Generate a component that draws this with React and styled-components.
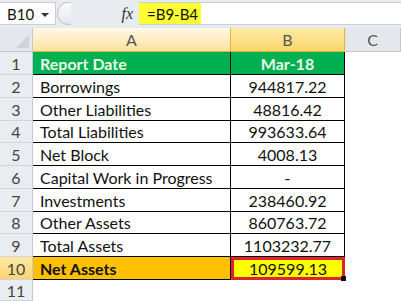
import React from "react";
import styled, { createGlobalStyle } from "styled-components";

const Global = createGlobalStyle`
  html, body { margin: 0; padding: 0; background: #fff; }
  body { font-family: Lato, "Open Sans", sans-serif; width: 401px; height: 301px; overflow: hidden; }
`;

const Page = styled.div`
  width: 401px;
  height: 301px;
  display: flex;
  flex-direction: column;
  background: #fff;
`;

const FormulaBar = styled.div`
  height: 28px;
  background: #e8ebef;
  display: flex;
  align-items: flex-start;
  padding-top: 2px;
  box-sizing: border-box;
`;

const NameBox = styled.div`
  width: 56px;
  height: 23px;
  background: #fff;
  border: 1px solid #c9ced6;
  border-left: none;
  box-sizing: border-box;
  display: flex;
  align-items: center;
  padding-left: 7px;
  font-size: 15px;
  color: #111;
  position: relative;
`;

const Arrow = styled.span`
  position: absolute;
  right: 6px;
  top: 10px;
  width: 0;
  height: 0;
  border-left: 4px solid transparent;
  border-right: 4px solid transparent;
  border-top: 4px solid #333;
`;

const Splitter = styled.div`
  margin-left: 1px;
  width: 14px;
  height: 23px;
  border: 1px solid #c3c8cf;
  border-right: none;
  border-radius: 12px 0 0 12px;
  background: linear-gradient(#fbfbfc, #e4e7eb);
  box-sizing: border-box;
`;

const FxArea = styled.div`
  width: 68px;
  height: 23px;
  display: flex;
  align-items: center;
  justify-content: flex-end;
  padding-right: 6px;
  box-sizing: border-box;
  font-family: "Liberation Serif", serif;
  font-style: italic;
  font-size: 16px;
  color: #333;
`;

const Input = styled.div`
  flex: 1;
  height: 23px;
  background: #fff;
  border-top: 1px solid #c9ced6;
  border-bottom: 1px solid #c9ced6;
  box-sizing: border-box;
  display: flex;
`;

const Highlight = styled.div`
  width: 62px;
  height: 100%;
  background: #ffff33;
  display: flex;
  align-items: center;
  padding-left: 8px;
  box-sizing: border-box;
  font-size: 15px;
  color: #111;
`;

const Grid = styled.div`
  display: grid;
  grid-template-columns: 33px 198px 114px 1fr;
  grid-template-rows: 24px ${(p) => p.rows};
  flex: 1;
`;

const Corner = styled.div`
  background: #e4e7eb;
  border-right: 1px solid #c6cad0;
  border-bottom: 1px solid #c6cad0;
  position: relative;
  &::after {
    content: "";
    position: absolute;
    right: 3px;
    bottom: 3px;
    width: 0;
    height: 0;
    border-left: 13px solid transparent;
    border-bottom: 13px solid #cfd3d9;
  }
`;

const ColHead = styled.div`
  display: flex;
  align-items: center;
  justify-content: center;
  font-size: 16px;
  color: #555;
  border-right: 1px solid ${(p) => (p.$sel ? "#e2b54a" : "#c6cad0")};
  border-bottom: 1px solid ${(p) => (p.$sel ? "#e8b440" : "#c6cad0")};
  background: ${(p) =>
    p.$sel === "strong"
      ? "linear-gradient(#fdeaa6, #fbd66a)"
      : p.$sel
      ? "linear-gradient(#fef8e6, #fde3a0)"
      : "#e4e7eb"};
`;

const RowHead = styled.div`
  display: flex;
  align-items: center;
  justify-content: center;
  font-size: 16px;
  color: #444;
  border-right: 1px solid #c6cad0;
  border-bottom: 1px solid #d2d6db;
  background: ${(p) => (p.$sel ? "linear-gradient(#fde9a2, #f9d475)" : "#e9ecf0")};
  box-sizing: border-box;
`;

const Cell = styled.div`
  display: flex;
  align-items: center;
  justify-content: ${(p) => (p.$center ? "center" : "flex-start")};
  padding-left: ${(p) => (p.$center ? "0" : "7px")};
  font-size: 16px;
  color: ${(p) => (p.$variant === "green" ? "#eaf7ea" : "#111")};
  font-weight: ${(p) => (p.$variant === "green" || p.$variant === "orange" ? 700 : 400)};
  background: ${(p) =>
    p.$variant === "green"
      ? "#00b050"
      : p.$variant === "orange"
      ? "#ffc000"
      : p.$variant === "yellow"
      ? "#ffff00"
      : "#fff"};
  border-right: 1px solid #000;
  border-bottom: 1px solid #000;
  box-sizing: border-box;
  white-space: nowrap;
  overflow: hidden;
  position: relative;
`;

const Selected = styled(Cell)`
  border: 3px solid #e0222b;
  overflow: visible;
  &::after {
    content: "";
    position: absolute;
    right: -4px;
    bottom: -4px;
    width: 5px;
    height: 5px;
    background: #111;
  }
`;

const Empty = styled.div`
  background: #fff;
`;

const data = [
  ["Report Date", "Mar-18", "green"],
  ["Borrowings", "944817.22"],
  ["Other Liabilities", "48816.42"],
  ["Total Liabilities", "993633.64"],
  ["Net Block", "4008.13"],
  ["Capital Work in Progress", "-"],
  ["Investments", "238460.92"],
  ["Other Assets", "860763.72"],
  ["Total Assets", "1103232.77"],
  ["Net Assets", "109599.13", "orange"],
];

const heights = [23, 23, 23, 22, 23, 23, 23, 22, 23, 23, 21];

export default function App() {
  return (
    <Page>
      <Global />
      <FormulaBar>
        <NameBox>
          B10
          <Arrow />
        </NameBox>
        <Splitter />
        <FxArea>fx</FxArea>
        <Input>
          <Highlight>=B9-B4</Highlight>
        </Input>
      </FormulaBar>
      <Grid rows={heights.map((h) => h + "px").join(" ")}>
        <Corner />
        <ColHead $sel="light">A</ColHead>
        <ColHead $sel="strong">B</ColHead>
        <ColHead>C</ColHead>
        {data.map(([label, value, variant], i) => (
          <React.Fragment key={i}>
            <RowHead $sel={i === 9}>{i + 1}</RowHead>
            <Cell $variant={variant}>{label}</Cell>
            {i === 9 ? (
              <Selected $center $variant="yellow">{value}</Selected>
            ) : (
              <Cell $center $variant={variant}>{value}</Cell>
            )}
            <Empty />
          </React.Fragment>
        ))}
        <RowHead>11</RowHead>
        <Empty />
        <Empty />
        <Empty />
      </Grid>
    </Page>
  );
}
